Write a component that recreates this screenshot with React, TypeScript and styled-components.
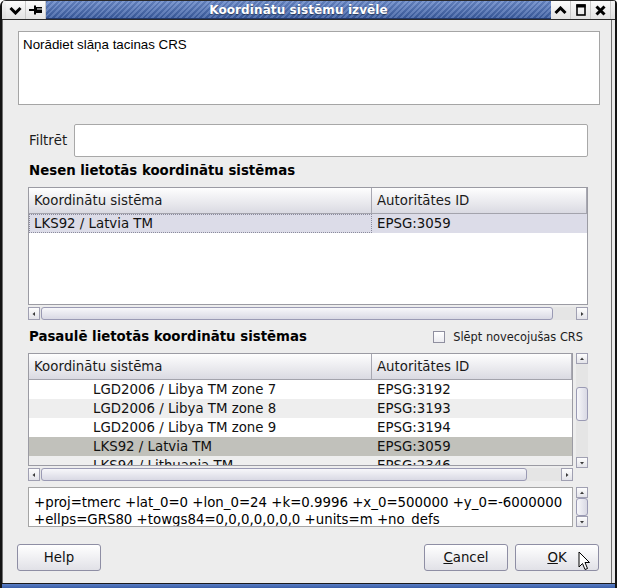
import styled, { createGlobalStyle } from "styled-components";

const GlobalStyle = createGlobalStyle`
  html, body {
    margin: 0;
    padding: 0;
    background: #ffffff;
  }
  body {
    font-family: "DejaVu Sans", "Noto Sans", sans-serif;
    font-size: 10pt;
    color: #000000;
  }
`;

const Window = styled.div`
  position: relative;
  width: 617px;
  height: 588px;
  box-sizing: border-box;
  display: flex;
  flex-direction: column;
  background: #e9e9e9;
  border-left: 2px solid #141414;
  border-right: 2px solid #141414;
  border-top-left-radius: 6px;
  border-top-right-radius: 4px;
  overflow: hidden;
`;

/* ---- title bar ---- */

const TitleBar = styled.div`
  display: flex;
  height: 20px;
  flex-shrink: 0;
  background: linear-gradient(#f4f4f4, #dedede);
  border-top: 1px solid #2a2a2a;
  border-bottom: 1px solid #2b2b2b;
  box-sizing: border-box;
`;

const TitleCap = styled.div<{ $w: number }>`
  width: ${(p) => p.$w}px;
  flex-shrink: 0;
`;

const TitleButton = styled.div`
  width: 20px;
  flex-shrink: 0;
  display: flex;
  align-items: center;
  justify-content: center;
  background: linear-gradient(#fbfbfb, #e3e3e3);
  border-right: 1px solid #c9c9c9;
  box-sizing: border-box;
`;

const TitleStripes = styled.div`
  flex: 1;
  display: flex;
  align-items: center;
  justify-content: center;
  background: linear-gradient(rgba(255, 255, 255, 0.18), rgba(0, 0, 0, 0.12)),
    repeating-linear-gradient(135deg, #3f63ab 0 2px, #6283c6 2px 4px);
  border-bottom: 1px solid #22386a;
  color: #ffffff;
  font-weight: bold;
  font-size: 12px;
  text-shadow: 0 1px 1px rgba(0, 0, 0, 0.45);
  letter-spacing: 0.1px;
`;

/* ---- dialog body ---- */

const Body = styled.div`
  flex: 1;
  display: flex;
  flex-direction: column;
  background: #ededed;
  border-left: 1px solid #707070;
  border-right: 1px solid #707070;
  margin-right: 3px;
  padding: 11px 11px 0 15px;
`;

const Description = styled.div`
  height: 74px;
  box-sizing: border-box;
  background: #ffffff;
  border: 1px solid #a5a5a5;
  padding: 5px 4px;
  font-family: "Liberation Sans", Arial, sans-serif;
  font-size: 13.33px;
  line-height: 16px;
`;

const Group = styled.div`
  display: flex;
  flex-direction: column;
  margin: 0 12px 0 10px;
`;

const FilterRow = styled.div`
  display: flex;
  align-items: center;
  gap: 7px;
  height: 33px;
  margin-top: 19px;
`;

const FieldLabel = styled.span`
  padding-left: 1px;
  color: #1c1c1c;
`;

const FilterInput = styled.div`
  flex: 1;
  height: 33px;
  box-sizing: border-box;
  background: #ffffff;
  border: 1px solid #a8a8a8;
  border-radius: 2px;
`;

const SectionRow = styled.div<{ $top: number }>`
  display: flex;
  align-items: center;
  justify-content: space-between;
  height: 16px;
  line-height: 16px;
  margin-top: ${(p) => p.$top}px;
`;

const SectionTitle = styled.span`
  font-weight: bold;
  padding-left: 1px;
`;

const CheckLabel = styled.label`
  display: flex;
  align-items: center;
  gap: 8px;
  margin-right: 5px;
  font-size: 11.4px;
  color: #1c1c1c;
`;

const CheckBox = styled.span`
  width: 12px;
  height: 12px;
  box-sizing: border-box;
  border: 1px solid #8f8f9f;
  background: linear-gradient(#ffffff, #ececf0);
`;

/* ---- tables ---- */

const TableFrame = styled.div<{ $h: number; $top?: number }>`
  height: ${(p) => p.$h}px;
  margin-top: ${(p) => p.$top ?? 0}px;
  box-sizing: border-box;
  border: 1px solid #9b9ba3;
  background: #ffffff;
  overflow: hidden;
`;

const HeaderRow = styled.div`
  display: grid;
  grid-template-columns: 343px 1fr;
  height: 26px;
  box-sizing: border-box;
  border-bottom: 1px solid #a3a3ac;
`;

const HeaderCell = styled.div`
  display: flex;
  align-items: center;
  padding-left: 5px;
  box-sizing: border-box;
  border-right: 1px solid #a8a8b2;
  background: linear-gradient(#fefefe, #dadae2);
  color: #1a1a1a;
`;

type Tone = "plain" | "alt" | "current" | "recent";

const toneColour: Record<Tone, string> = {
  plain: "#ffffff",
  alt: "#eeeeee",
  current: "#c1c1bb",
  recent: "#dcdce8",
};

const Row = styled.div<{ $tone: Tone }>`
  display: grid;
  grid-template-columns: 343px 1fr;
  height: 19px;
  line-height: 19px;
  background: ${(p) => toneColour[p.$tone]};
`;

const Cell = styled.div<{ $indent?: number; $focus?: boolean }>`
  padding-left: ${(p) => p.$indent ?? 5}px;
  white-space: nowrap;
  overflow: hidden;
  color: #111111;
  outline: ${(p) => (p.$focus ? "1px dotted #8a8a9c" : "none")};
  outline-offset: -1px;
`;

/* ---- scroll bars ---- */

const HScroll = styled.div<{ $top?: number }>`
  display: flex;
  height: 13px;
  margin-top: ${(p) => p.$top ?? 0}px;
  background: #e5e5e5;
`;

const VScroll = styled.div<{ $h: number }>`
  display: flex;
  flex-direction: column;
  width: 12px;
  height: ${(p) => p.$h}px;
  background: #e5e5e5;
`;

const ArrowButton = styled.div<{ $vertical?: boolean }>`
  display: flex;
  align-items: center;
  justify-content: center;
  flex-shrink: 0;
  width: 12px;
  height: ${(p) => (p.$vertical ? 11 : 13)}px;
  box-sizing: border-box;
  border: 1px solid #a0a0b2;
  background: linear-gradient(#fdfdfd, #e3e3e9);
`;

const Track = styled.div<{ $vertical?: boolean }>`
  flex: 1;
  display: flex;
  flex-direction: ${(p) => (p.$vertical ? "column" : "row")};
`;

const Thumb = styled.div<{ $vertical?: boolean; $size?: number; $offset?: number }>`
  box-sizing: border-box;
  border: 1px solid #9a9ab4;
  border-radius: 3px;
  ${(p) =>
    p.$vertical
      ? `
    width: 12px;
    margin-top: ${p.$offset ?? 0}px;
    ${p.$size ? `height: ${p.$size}px;` : "flex: 1;"}
    background: linear-gradient(to right, #f7f7fa, #d9d9e4);
  `
      : `
    height: 13px;
    margin-left: ${p.$offset ?? 0}px;
    width: ${p.$size}px;
    background: linear-gradient(#f7f7fa, #d9d9e4);
  `}
`;

const TableWithScroll = styled.div`
  display: grid;
  grid-template-columns: 1fr 12px;
  column-gap: 3px;
  align-items: start;
  margin-top: 8px;
`;

const TableColumn = styled.div`
  display: flex;
  flex-direction: column;
`;

const ProjRow = styled.div`
  display: grid;
  grid-template-columns: 1fr 12px;
  column-gap: 3px;
  margin-top: 6px;
`;

const ProjText = styled.div`
  height: 40px;
  box-sizing: border-box;
  border: 1px solid #a5a5a5;
  background: #ffffff;
  padding: 6px 5px 0;
  line-height: 17px;
  white-space: nowrap;
  overflow: hidden;
`;

/* ---- buttons ---- */

const ButtonRow = styled.div`
  display: flex;
  gap: 7px;
  margin: 17px 1px 0 -1px;
`;

const Spacer = styled.div`
  flex: 1;
`;

const PushButton = styled.div`
  position: relative;
  width: 84px;
  height: 27px;
  box-sizing: border-box;
  display: flex;
  align-items: center;
  justify-content: center;
  border: 1px solid #8e8ea4;
  border-radius: 3px;
  background: linear-gradient(#ffffff, #e1e1e7);
  color: #111111;
`;

const Pointer = styled.svg`
  position: absolute;
  left: 62px;
  top: 6px;
`;

const BottomEdge = styled.div`
  height: 5px;
  flex-shrink: 0;
  box-sizing: border-box;
  border-top: 1px solid #1b1b1b;
  background: linear-gradient(#5b7fc6, #3a5ea6);
`;

/* ---- small drawings ---- */

const Arrow = ({ dir }: { dir: "up" | "down" | "left" | "right" }) => {
  const pts = {
    up: "1,4 3,1.5 5,4",
    down: "1,2 3,4.5 5,2",
    left: "4,1 1.5,3 4,5",
    right: "2,1 4.5,3 2,5",
  }[dir];
  return (
    <svg width="6" height="6" viewBox="0 0 6 6">
      <polygon points={pts} fill="#3a3a3a" />
    </svg>
  );
};

const ChevronDown = () => (
  <svg width="13" height="9" viewBox="0 0 13 9">
    <polyline points="1.5,2 6.5,7 11.5,2" fill="none" stroke="#000" strokeWidth="3" />
  </svg>
);

const ChevronUp = () => (
  <svg width="13" height="9" viewBox="0 0 13 9">
    <polyline points="1.5,7 6.5,2 11.5,7" fill="none" stroke="#000" strokeWidth="3" />
  </svg>
);

const PinIcon = () => (
  <svg width="14" height="10" viewBox="0 0 14 10">
    <rect x="0" y="4" width="5" height="2" fill="#000" />
    <rect x="5" y="0.5" width="2" height="9" fill="#000" />
    <rect x="7" y="2" width="6" height="6" fill="#000" />
    <rect x="8" y="3.5" width="5" height="1" fill="#fff" />
  </svg>
);

const MaximizeIcon = () => (
  <svg width="10" height="12" viewBox="0 0 10 12">
    <rect x="1" y="1" width="8" height="10" fill="none" stroke="#000" strokeWidth="1.6" />
    <rect x="0.5" y="0.5" width="9" height="3" fill="#000" />
  </svg>
);

const CloseIcon = () => (
  <svg width="11" height="11" viewBox="0 0 11 11">
    <path d="M1.5 1.5 L9.5 9.5 M9.5 1.5 L1.5 9.5" stroke="#000" strokeWidth="3" />
  </svg>
);

/* ---- data ---- */

type CrsRow = { name: string; id: string; tone: Tone };

const recent: CrsRow[] = [{ name: "LKS92 / Latvia TM", id: "EPSG:3059", tone: "recent" }];

const world: CrsRow[] = [
  { name: "LGD2006 / Libya TM zone 7", id: "EPSG:3192", tone: "plain" },
  { name: "LGD2006 / Libya TM zone 8", id: "EPSG:3193", tone: "alt" },
  { name: "LGD2006 / Libya TM zone 9", id: "EPSG:3194", tone: "plain" },
  { name: "LKS92 / Latvia TM", id: "EPSG:3059", tone: "current" },
  { name: "LKS94 / Lithuania TM", id: "EPSG:2346", tone: "alt" },
];

const CrsHeader = () => (
  <HeaderRow>
    <HeaderCell>Koordinātu sistēma</HeaderCell>
    <HeaderCell>Autoritātes ID</HeaderCell>
  </HeaderRow>
);

const HorizontalBar = ({ thumb, top }: { thumb: number; top?: number }) => (
  <HScroll $top={top}>
    <ArrowButton>
      <Arrow dir="left" />
    </ArrowButton>
    <Track>
      <Thumb $size={thumb} $offset={1} />
    </Track>
    <ArrowButton>
      <Arrow dir="right" />
    </ArrowButton>
  </HScroll>
);

const App = () => {
  return (
    <>
      <GlobalStyle />
      <Window>
        <TitleBar>
          <TitleCap $w={4} />
          <TitleButton>
            <ChevronDown />
          </TitleButton>
          <TitleButton>
            <PinIcon />
          </TitleButton>
          <TitleStripes>Koordinātu sistēmu izvēle</TitleStripes>
          <TitleButton>
            <ChevronUp />
          </TitleButton>
          <TitleButton>
            <MaximizeIcon />
          </TitleButton>
          <TitleButton>
            <CloseIcon />
          </TitleButton>
          <TitleCap $w={4} />
        </TitleBar>

        <Body>
          <Description>Norādiet slāņa tacinas CRS</Description>

          <Group>
            <FilterRow>
              <FieldLabel>Filtrēt</FieldLabel>
              <FilterInput />
            </FilterRow>

            <SectionRow $top={6}>
              <SectionTitle>Nesen lietotās koordinātu sistēmas</SectionTitle>
            </SectionRow>

            <TableFrame $h={118} $top={8}>
              <CrsHeader />
              {recent.map((r) => (
                <Row key={r.id} $tone={r.tone}>
                  <Cell $focus>{r.name}</Cell>
                  <Cell>{r.id}</Cell>
                </Row>
              ))}
            </TableFrame>
            <HorizontalBar thumb={512} top={2} />

            <SectionRow $top={9}>
              <SectionTitle>Pasaulē lietotās koordinātu sistēmas</SectionTitle>
              <CheckLabel>
                <CheckBox />
                Slēpt novecojušas CRS
              </CheckLabel>
            </SectionRow>

            <TableWithScroll>
              <TableColumn>
                <TableFrame $h={113}>
                  <CrsHeader />
                  {world.map((r) => (
                    <Row key={r.id} $tone={r.tone}>
                      <Cell $indent={64}>{r.name}</Cell>
                      <Cell>{r.id}</Cell>
                    </Row>
                  ))}
                </TableFrame>
                <HorizontalBar thumb={486} top={2} />
              </TableColumn>
              <VScroll $h={115}>
                <ArrowButton $vertical>
                  <Arrow dir="up" />
                </ArrowButton>
                <Track $vertical>
                  <Thumb $vertical $size={34} $offset={23} />
                </Track>
                <ArrowButton $vertical>
                  <Arrow dir="down" />
                </ArrowButton>
              </VScroll>
            </TableWithScroll>

            <ProjRow>
              <ProjText>
                +proj=tmerc +lat_0=0 +lon_0=24 +k=0.9996 +x_0=500000 +y_0=-6000000
                <br />
                +ellps=GRS80 +towgs84=0,0,0,0,0,0,0 +units=m +no_defs
              </ProjText>
              <VScroll $h={40}>
                <ArrowButton $vertical>
                  <Arrow dir="up" />
                </ArrowButton>
                <Track $vertical>
                  <Thumb $vertical $offset={0} />
                </Track>
                <ArrowButton $vertical>
                  <Arrow dir="down" />
                </ArrowButton>
              </VScroll>
            </ProjRow>
          </Group>

          <ButtonRow>
            <PushButton>Help</PushButton>
            <Spacer />
            <PushButton>
              <span>
                <u>C</u>ancel
              </span>
            </PushButton>
            <PushButton>
              <span>
                <u>O</u>K
              </span>
              <Pointer width="13" height="20" viewBox="0 0 13 20">
                <path
                  d="M1 1 L1 16 L4.5 12.5 L7 18.5 L9.5 17.5 L7 11.5 L11.5 11.5 Z"
                  fill="#ffffff"
                  stroke="#000000"
                  strokeWidth="1"
                  strokeLinejoin="miter"
                />
              </Pointer>
            </PushButton>
          </ButtonRow>
        </Body>

        <BottomEdge />
      </Window>
    </>
  );
};

export default App;
